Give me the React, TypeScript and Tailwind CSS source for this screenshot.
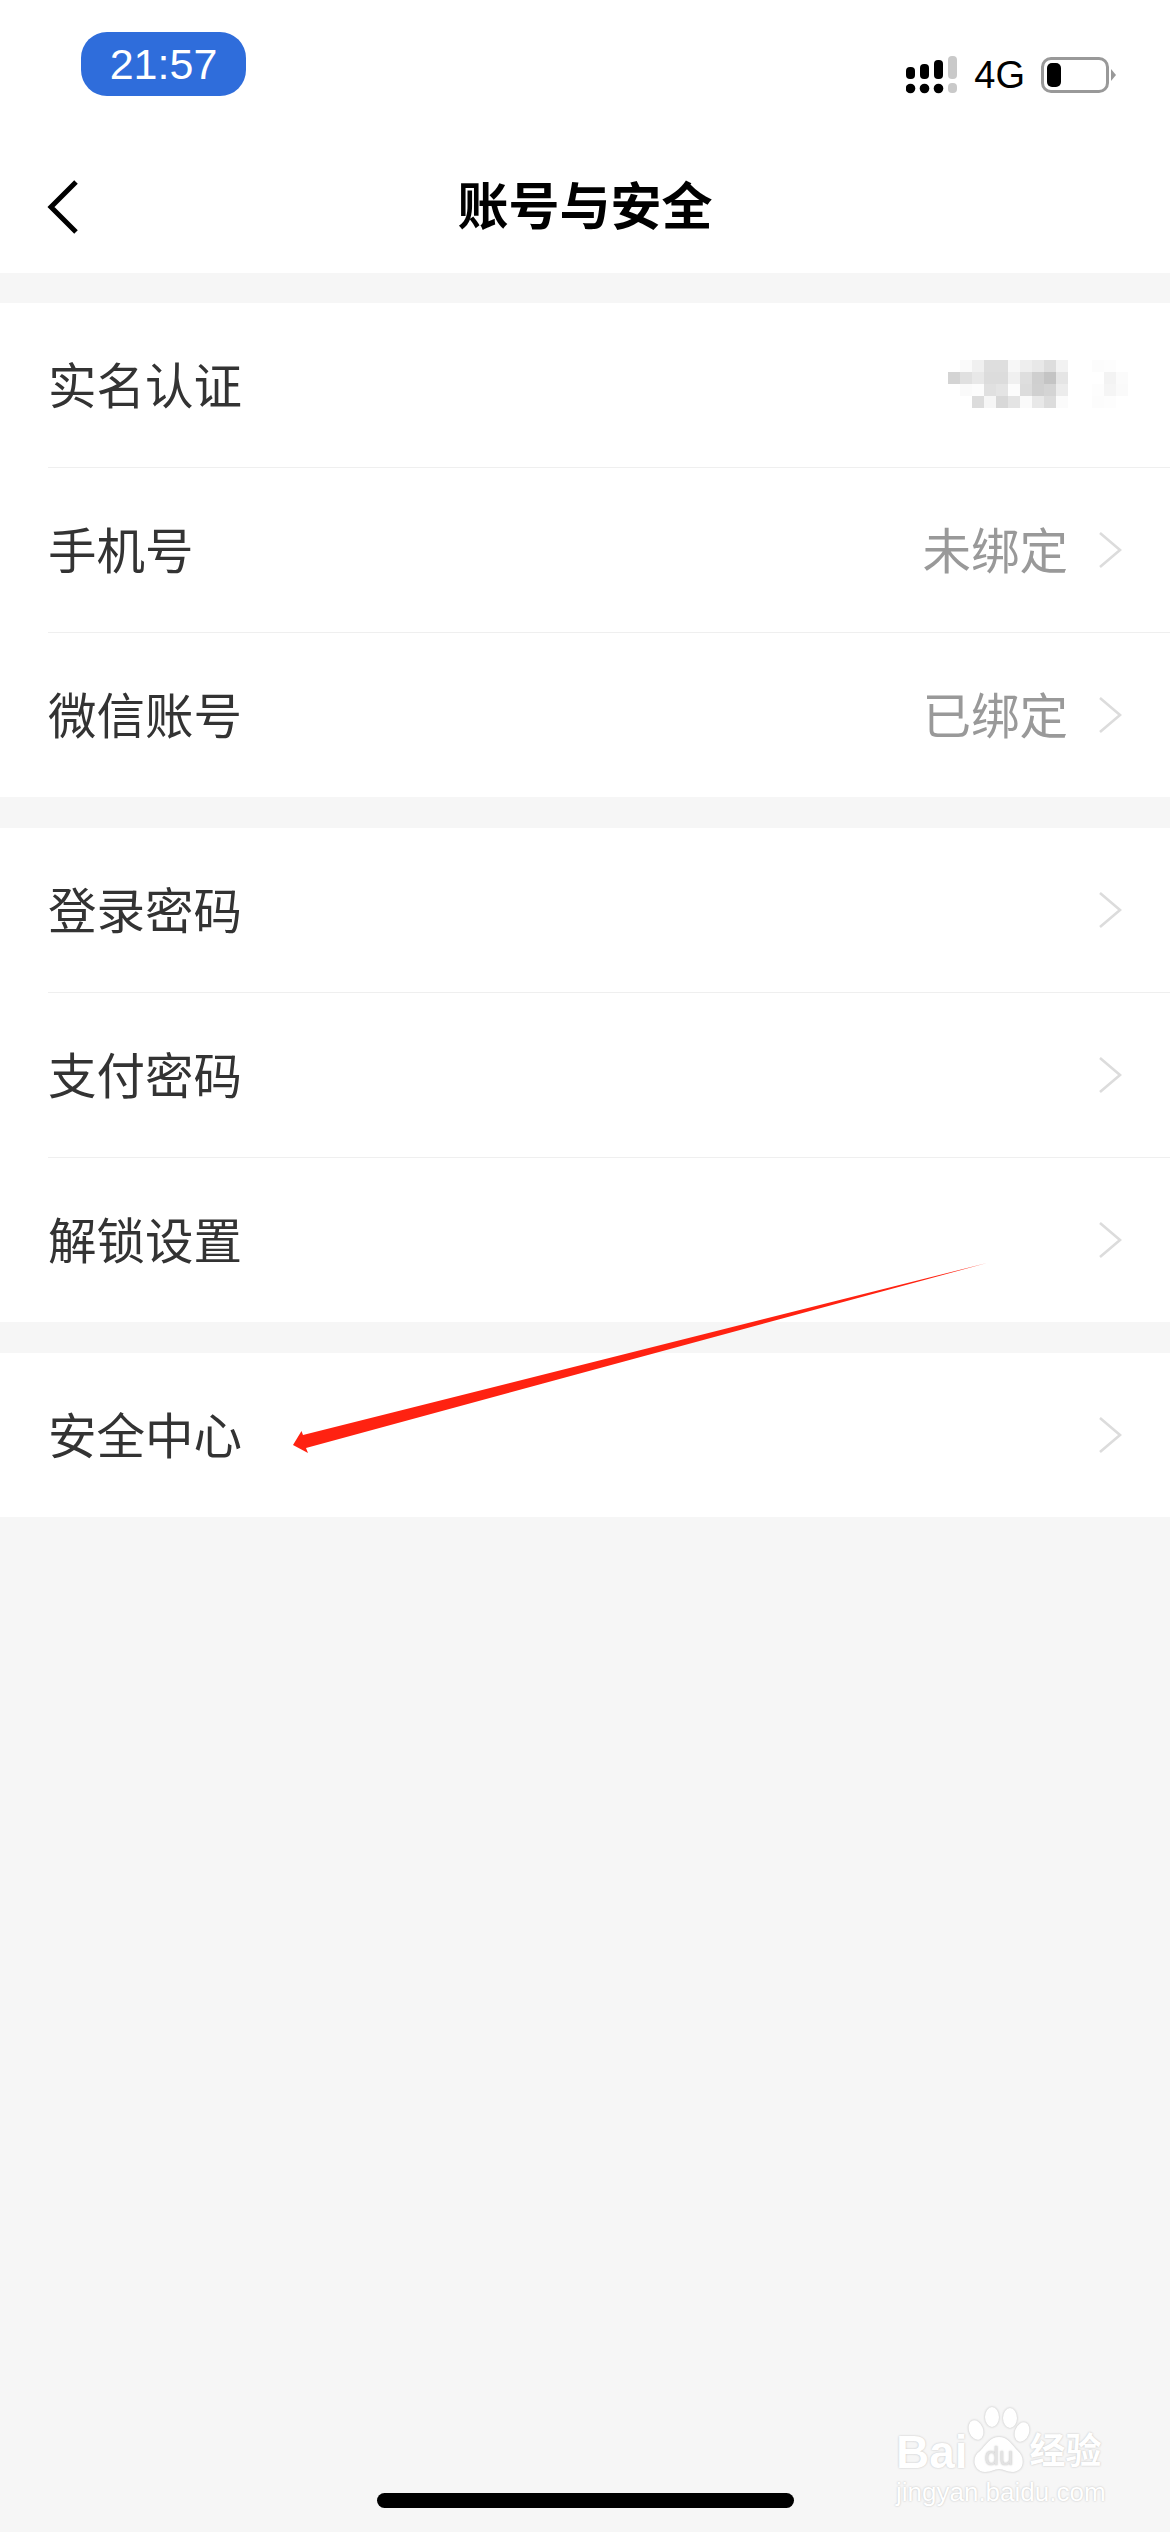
import React from 'react';

const FONT = 'font-["Liberation_Sans","Noto_Sans_CJK_SC",sans-serif]';

const MOSAIC: string[][] = [
  ['', '#fafafa', '#f0f0f0', '#dedede', '#dedede', '#f7f7f7', '#eeeeee', '#e8e8e8', '#dddddd', '#f2f2f2', '', '', '#fcfcfc', '#fdfdfd', ''],
  ['#d4d4d4', '#e0e0e0', '#e8e8e8', '#dcdcdc', '#dcdcdc', '#f0f0f0', '#dedede', '#cfcfcf', '#c4c4c4', '#e5e5e5', '', '', '', '#f3f3f3', '#fbfbfb'],
  ['', '#fafafa', '#fcfcfc', '#e0e0e0', '#e4e4e4', '#fcfcfc', '#dcdcdc', '#d0d0d0', '#d4d4d4', '#ececec', '', '', '#fdfdfd', '#f5f5f5', '#fafafa'],
  ['', '', '#dcdcdc', '#f6f6f6', '#d8d8d8', '#e4e4e4', '#fafafa', '#e8e8e8', '#dcdcdc', '#fbfbfb', '', '', '#fcfcfc', '#fdfdfd', ''],
];

const Chevron = () => (
  <svg width="24" height="38" viewBox="0 0 24 38" fill="none" className="shrink-0">
    <path d="M2 2 L22 19 L2 36" stroke="#dcdcdc" strokeWidth="2.6" />
  </svg>
);

const Mosaic = () => (
  <svg width="180" height="48" viewBox="0 0 180 48" className="shrink-0">
    {MOSAIC.map((row, y) =>
      row.map((color, x) =>
        color ? <rect key={`${x}-${y}`} x={x * 12} y={y * 12} width="12" height="12" fill={color} /> : null
      )
    )}
  </svg>
);

const Row = ({ label, value, mosaic, last }: { label: string; value?: string; mosaic?: boolean; last?: boolean }) => (
  <div className="pl-[48px]">
    <div className={`flex items-center justify-between ${last ? 'h-[164px]' : 'h-[165px] border-b border-[#efefef]'}`}>
      <span className="pt-[4px] text-[48.5px] leading-none text-[#333333]">{label}</span>
      {mosaic ? (
        <div className="pr-[42px] pb-[2px]">
          <Mosaic />
        </div>
      ) : (
        <div className="flex items-center pr-[48px]">
          {value && <span className="pt-[4px] text-[48.5px] leading-none text-[#999999] mr-[30px]">{value}</span>}
          <Chevron />
        </div>
      )}
    </div>
  </div>
);

const StatusBar = () => (
  <div className="flex justify-between h-[134px] pl-[81px] pr-[54px]">
    <div className="mt-[32px] w-[165px] h-[64px] rounded-[26px] bg-[#2f6ddb] flex items-center justify-center text-white text-[43px] leading-none">
      21:57
    </div>
    <div className="flex items-center h-[40px] mt-[55px]">
      <svg width="52" height="38" viewBox="0 0 52 38">
        <rect x="0" y="11" width="9" height="12" rx="4" fill="#000" />
        <rect x="14" y="8" width="9" height="15" rx="4" fill="#000" />
        <rect x="28" y="4" width="9" height="19" rx="4" fill="#000" />
        <rect x="42" y="0" width="9" height="23" rx="4" fill="#c9c9c9" />
        <circle cx="4.5" cy="32.5" r="4.8" fill="#000" />
        <circle cx="18.5" cy="32.5" r="4.8" fill="#000" />
        <circle cx="32.5" cy="32.5" r="4.8" fill="#000" />
        <rect x="42" y="27" width="9" height="10" rx="4" fill="#c9c9c9" />
      </svg>
      <span className="ml-[16px] text-[38px] leading-none text-black">4G</span>
      <div className="ml-[16px] w-[68px] h-[36px] rounded-[10px] border-[3px] border-[#999999] p-[3px]">
        <div className="w-[14px] h-full rounded-[5px] bg-black" />
      </div>
      <svg width="5" height="12" viewBox="0 0 5 12" className="ml-[2px]">
        <path d="M0 0 L5 6 L0 12 Z" fill="#999999" />
      </svg>
    </div>
  </div>
);

const Header = () => (
  <div className="relative flex items-center justify-center h-[139px] pt-[7px]">
    <svg width="32" height="54" viewBox="0 0 32 54" fill="none" className="absolute left-[47px] top-[46px]">
      <path d="M29 2 L4 27 L29 52" stroke="#000" strokeWidth="5" />
    </svg>
    <span className="text-[51px] leading-none font-bold text-black">账号与安全</span>
  </div>
);

const Watermark = () => (
  <div className="absolute left-[896px] top-[2407px] w-[212px] text-white [text-shadow:0_0_2px_#bbbbbb]">
    <div className="flex items-end h-[66px]">
      <span className="text-[46px] leading-[42px] font-bold">Bai</span>
      <svg width="62" height="66" viewBox="0 0 62 66" className="shrink-0 drop-shadow-[0_0_1px_#bbbbbb]">
        <ellipse cx="8" cy="23" rx="7" ry="10" fill="#fff" transform="rotate(-20 8 23)" />
        <ellipse cx="24" cy="10" rx="7" ry="10" fill="#fff" />
        <ellipse cx="42" cy="11" rx="7" ry="10" fill="#fff" />
        <ellipse cx="54" cy="25" rx="7" ry="10" fill="#fff" transform="rotate(20 54 25)" />
        <path d="M31 30 C40 30 44 38 50 44 C57 50 57 64 45 65 C38 65 36 62 31 62 C26 62 24 65 17 65 C5 64 3 50 12 44 C18 38 22 30 31 30 Z" fill="#fff" />
        <text x="31" y="58" textAnchor="middle" fontSize="26" fill="#e3e3e3" fontFamily="Liberation Sans">du</text>
      </svg>
      <span className="text-[36px] leading-[42px] font-bold whitespace-nowrap">经验</span>
    </div>
    <div className="text-[26px] leading-[30px] mt-[4px] whitespace-nowrap">jingyan.baidu.com</div>
  </div>
);

export default function App() {
  return (
    <div className={`relative h-[2532px] bg-[#f6f6f6] overflow-hidden ${FONT}`}>
      <div className="bg-white">
        <StatusBar />
        <Header />
      </div>

      <div className="mt-[30px] bg-white">
        <Row label="实名认证" mosaic />
        <Row label="手机号" value="未绑定" />
        <Row label="微信账号" value="已绑定" last />
      </div>

      <div className="mt-[31px] bg-white">
        <Row label="登录密码" />
        <Row label="支付密码" />
        <Row label="解锁设置" last />
      </div>

      <div className="mt-[31px] bg-white">
        <Row label="安全中心" last />
      </div>

      <svg width="1170" height="2532" viewBox="0 0 1170 2532" className="absolute inset-0 pointer-events-none">
        <path d="M987 1263 L306 1448 L308 1453 L293 1445 L301.5 1431 L303 1435 Z" fill="#ff2211" />
      </svg>

      <Watermark />

      <div className="absolute left-[377px] top-[2493px] w-[417px] h-[15px] rounded-full bg-black" />
    </div>
  );
}
